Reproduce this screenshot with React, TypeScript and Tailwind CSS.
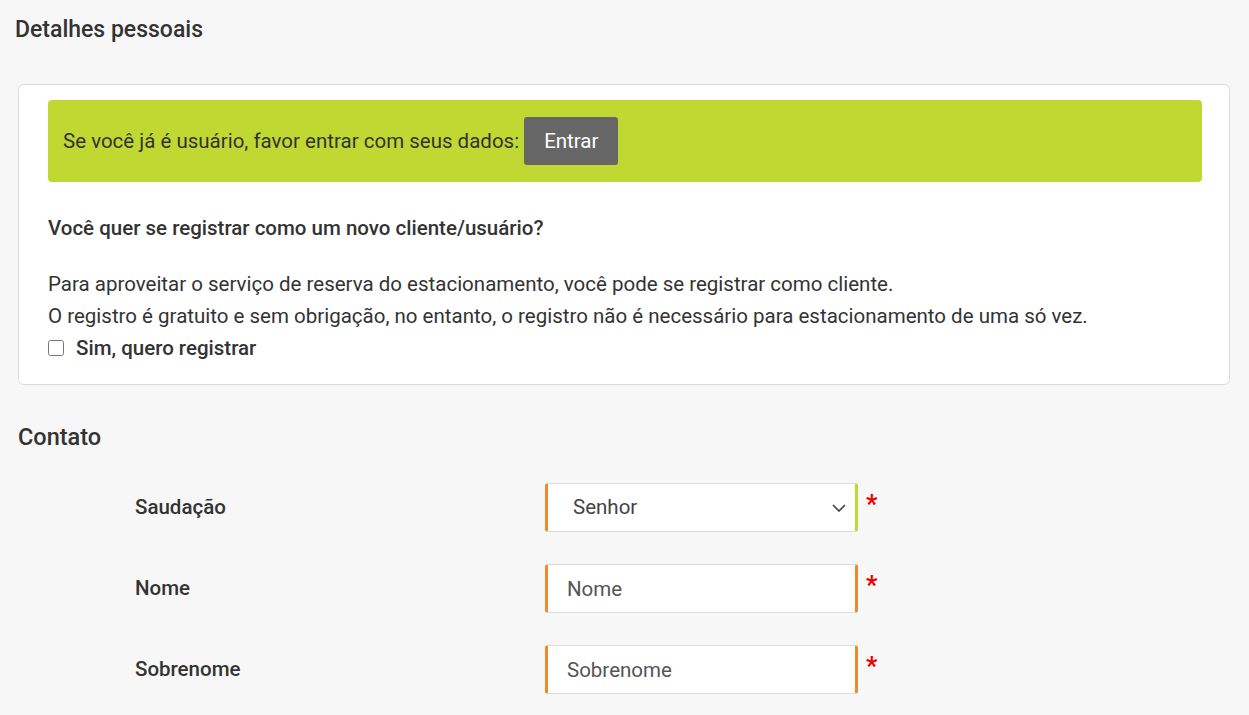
import { useState } from 'react';

const fieldBase =
  'w-[313px] h-[49px] bg-white border border-[#dcdcdc] border-l-[3px] border-l-[#ee8a2c] rounded-[3px] text-[20.5px] text-[#444] outline-none';

function Row({ label, children }: { label: string; children: React.ReactNode }) {
  return (
    <div className="flex items-center h-[49px]">
      <label className="w-[545px] pl-[135px] text-[20.5px] font-medium text-[#333]">{label}</label>
      <div className="flex items-start">
        {children}
        <span className="ml-[8px] mt-[9px] text-[25px] font-bold text-[#e00] leading-none">*</span>
      </div>
    </div>
  );
}

export default function App() {
  const [register, setRegister] = useState(false);
  const [salutation, setSalutation] = useState('Senhor');

  return (
    <div className="min-h-screen bg-[#f7f7f7] text-[#333] font-['Roboto',sans-serif]">
      <h2 className="pl-[15px] pt-[14px] text-[23px] font-medium leading-[32px]">Detalhes pessoais</h2>

      <div className="mt-[38px] mx-[18px] w-[1212px] bg-white border border-[#dcdcdc] rounded-[6px] pl-[29px] pr-[27px] pt-[15px] pb-[20px]">
        <div className="h-[82px] bg-[#c0d932] rounded-[4px] flex items-center pl-[15px] text-[20.5px] text-[#333]">
          <span>Se você já é usuário, favor entrar com seus dados:</span>
          <button className="ml-[5px] h-[48px] px-[20px] bg-[#666] text-white rounded-[3px] text-[20.5px]">
            Entrar
          </button>
        </div>

        <p className="mt-[30px] text-[20.5px] font-medium leading-[32px]">
          Você quer se registrar como um novo cliente/usuário?
        </p>

        <div className="mt-[24px] text-[20.5px] leading-[32px]">
          <p>Para aproveitar o serviço de reserva do estacionamento, você pode se registrar como cliente.</p>
          <p>O registro é gratuito e sem obrigação, no entanto, o registro não é necessário para estacionamento de uma só vez.</p>
          <label className="flex items-center gap-[12px] font-medium">
            <input
              type="checkbox"
              checked={register}
              onChange={(e) => setRegister(e.target.checked)}
              className="w-[16px] h-[16px]"
            />
            Sim, quero registrar
          </label>
        </div>
      </div>

      <h2 className="pl-[18px] mt-[36px] text-[23.5px] font-medium leading-[32px]">Contato</h2>

      <div className="mt-[30px] flex flex-col gap-[32px]">
        <Row label="Saudação">
          <div className={`${fieldBase} border-r-[3px] border-r-[#c0d932] relative`}>
            <select
              value={salutation}
              onChange={(e) => setSalutation(e.target.value)}
              className="w-full h-full appearance-none bg-transparent pl-[25px] text-[20.5px] text-[#444] outline-none"
            >
              <option>Senhor</option>
              <option>Senhora</option>
            </select>
            <svg className="absolute right-[9px] top-[20px] pointer-events-none" width="14" height="8" viewBox="0 0 14 8" fill="none">
              <path d="M1 1l6 6 6-6" stroke="#444" strokeWidth="1.6" />
            </svg>
          </div>
        </Row>
        <Row label="Nome">
          <input placeholder="Nome" className={`${fieldBase} border-r-[3px] border-r-[#ee8a2c] px-[19px] placeholder:text-[#555]`} />
        </Row>
        <Row label="Sobrenome">
          <input placeholder="Sobrenome" className={`${fieldBase} border-r-[3px] border-r-[#ee8a2c] px-[19px] placeholder:text-[#555]`} />
        </Row>
      </div>
    </div>
  );
}
